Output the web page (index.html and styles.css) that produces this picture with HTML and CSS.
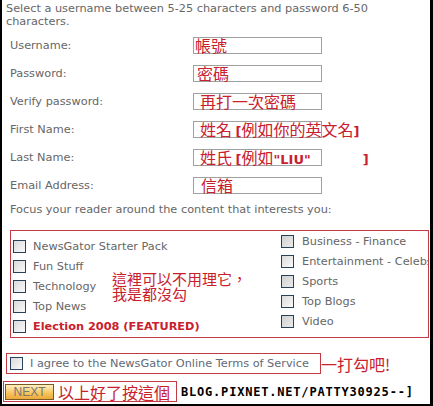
FILE: index.html
```html
<!DOCTYPE html>
<html lang="zh-Hant">
<head>
    <meta charset="UTF-8">
    <title>NewsGator Sign Up</title>
    <link rel="stylesheet" href="styles.css">
</head>
<body>
    <div class="frame">
        <p class="intro">Select a username between 5-25 characters and password 6-50 characters.</p>

        <div class="fields">
            <div class="row">
                <span class="label">Username:</span>
                <div class="field"><span class="note n-user">帳號</span></div>
            </div>
            <div class="row">
                <span class="label">Password:</span>
                <div class="field"><span class="note n-pass">密碼</span></div>
            </div>
            <div class="row">
                <span class="label">Verify password:</span>
                <div class="field"><span class="note n-wide">再打一次密碼</span></div>
            </div>
            <div class="row">
                <span class="label">First Name:</span>
                <div class="field"><span class="note n-wide">姓名 <b>[</b>例如你的英文名<b>]</b></span></div>
            </div>
            <div class="row">
                <span class="label">Last Name:</span>
                <div class="field"><span class="note n-wide">姓氏 <b>[</b>例如<b>"LIU"</b><span class="blank"></span><b>]</b></span></div>
            </div>
            <div class="row">
                <span class="label">Email Address:</span>
                <div class="field"><span class="note n-mail">信箱</span></div>
            </div>
        </div>

        <p class="focus">Focus your reader around the content that interests you:</p>

        <div class="topics">
            <ul class="col col-left">
                <li><span class="box"></span>NewsGator Starter Pack</li>
                <li><span class="box"></span>Fun Stuff</li>
                <li><span class="box"></span>Technology</li>
                <li><span class="box"></span>Top News</li>
                <li class="featured"><span class="box"></span>Election 2008 (FEATURED)</li>
            </ul>
            <ul class="col col-right">
                <li><span class="box grey"></span>Business - Finance</li>
                <li><span class="box"></span>Entertainment - Celebs</li>
                <li><span class="box grey"></span>Sports</li>
                <li><span class="box"></span>Top Blogs</li>
                <li><span class="box grey"></span>Video</li>
            </ul>
            <p class="remark">這裡可以不用理它，<br>我是都沒勾</p>
        </div>

        <div class="terms-row">
            <label class="terms"><span class="box"></span>I agree to the NewsGator Online Terms of Service</label>
            <span class="hint">一打勾吧!</span>
        </div>

        <div class="next-row">
            <div class="next-box">
                <button class="next" type="button">NEXT</button>
                <span class="hint">以上好了按這個</span>
            </div>
            <span class="credit">BLOG.PIXNET.NET/PATTY30925--]</span>
        </div>
    </div>
</body>
</html>
```

FILE: styles.css
```css
body {
    margin: 0;
    background-color: #fff;
}

.frame {
    width: 433px;
    height: 406px;
    box-sizing: border-box;
    border-left: 2px solid #000;
    border-right: 3px solid #000;
    border-bottom: 2px solid #000;
    font-family: "DejaVu Sans", Verdana, sans-serif;
    font-size: 11.3px;
    color: #666;
    overflow: hidden;
}

.intro {
    margin: 0;
    padding: 2px 4px 0 4px;
    line-height: 13px;
    width: 380px;
}

.fields {
    margin-top: 3px;
}

.row {
    display: grid;
    grid-template-columns: 183px 129px;
    align-items: center;
    height: 28px;
    padding-left: 8px;
}

.field {
    height: 17px;
    box-sizing: border-box;
    border: 1px solid #a0a0a0;
    white-space: nowrap;
}

.note {
    font-family: "Noto Sans CJK TC", sans-serif;
    font-size: 16px;
    line-height: 15px;
    color: #c8202c;
    display: block;
}

.note b {
    font-family: "DejaVu Sans", sans-serif;
    font-weight: bold;
    font-size: 13px;
}

.n-user { padding-left: 1px; }
.n-pass { padding-left: 3px; }
.n-wide { padding-left: 6px; }
.n-mail { padding-left: 7px; }

.blank {
    display: inline-block;
    width: 52px;
}

.focus {
    margin: 4px 0 0 0;
    padding-left: 8px;
    line-height: 14px;
}

.topics {
    position: relative;
    margin: 13px 0 0 8px;
    width: 419px;
    height: 108px;
    box-sizing: border-box;
    border: 1px solid #c23a44;
    padding-left: 2px;
    display: grid;
    grid-template-columns: 268px auto;
    overflow: hidden;
}

.col {
    list-style: none;
    margin: 0;
    padding: 0;
}

.col-left {
    padding-top: 5px;
}

.col li {
    display: flex;
    align-items: center;
    width: fit-content;
    height: 20px;
    white-space: nowrap;
}

.col-left li .box {
    margin-right: 7px;
}

.col-right li .box {
    margin-right: 8px;
}

.featured {
    color: #c8202c;
    font-weight: bold;
}

.box {
    display: inline-block;
    width: 13px;
    height: 13px;
    box-sizing: border-box;
    border: 1px solid #27425a;
    background: linear-gradient(135deg, #dadada, #fafafa);
    flex: none;
}

.box.grey {
    background: linear-gradient(135deg, #cfcfcf, #ececec);
}

.remark {
    position: absolute;
    left: 101px;
    top: 40px;
    margin: 0;
    font-family: "Noto Sans CJK TC", sans-serif;
    font-size: 15px;
    line-height: 15px;
    color: #c8202c;
}

.terms-row {
    display: flex;
    align-items: center;
    margin: 15px 0 0 4px;
    height: 21px;
}

.terms {
    display: flex;
    align-items: center;
    height: 21px;
    width: 315px;
    box-sizing: border-box;
    border: 1px solid #c23a44;
    padding-left: 3px;
    color: #5f6a76;
    white-space: nowrap;
}

.terms .box {
    margin-right: 7px;
}

.hint {
    font-family: "Noto Sans CJK TC", sans-serif;
    font-size: 16px;
    line-height: 18px;
    color: #c8202c;
    white-space: nowrap;
}

.next-row {
    display: flex;
    align-items: center;
    margin: 7px 0 0 1px;
}

.next-box {
    display: flex;
    align-items: center;
    gap: 4px;
    height: 21px;
    width: 174px;
    box-sizing: border-box;
    border: 1px solid #c23a44;
    padding-left: 1px;
}

.next {
    width: 49px;
    height: 16px;
    padding: 0;
    border: 1px solid #7a5a20;
    background: linear-gradient(#fff0c4, #f6c35a 60%, #eea83a);
    font-family: "Liberation Sans", Arial, sans-serif;
    font-size: 12px;
    color: #777;
}

.credit {
    margin-left: 4px;
    font-family: "DejaVu Sans Mono", monospace;
    font-weight: bold;
    font-size: 12px;
    letter-spacing: 0.8px;
    color: #000;
}
```
